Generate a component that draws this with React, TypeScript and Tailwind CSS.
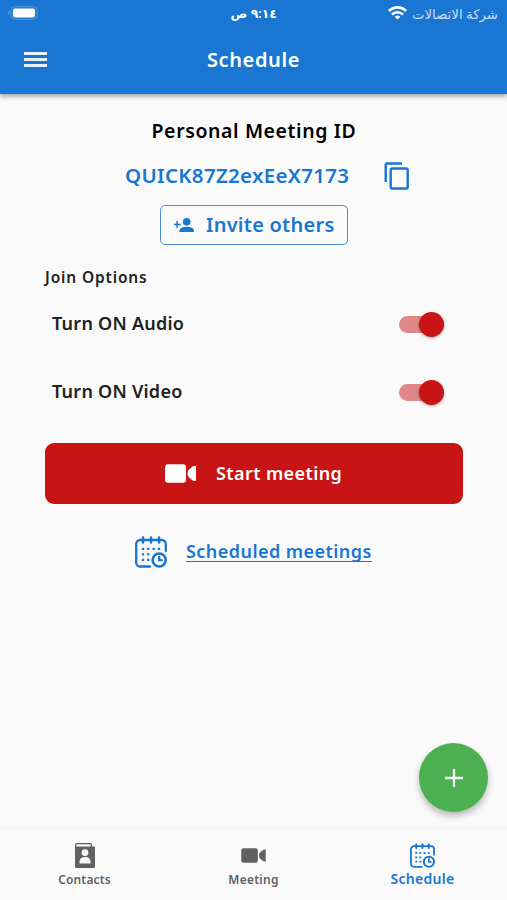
import { useState } from "react";

type IconProps = { className?: string };

function CalendarClockIcon({ className }: IconProps) {
  return (
    <svg viewBox="0 0 32 32" className={className} fill="none" stroke="currentColor" strokeWidth="2.3" strokeLinecap="round">
      <path d="M15 30.5H5.2a4 4 0 0 1-4-4V8a4 4 0 0 1 4-4h21.6a4 4 0 0 1 4 4v7" />
      <path d="M8 1.5v5M16 1.5v5M24 1.5v5" strokeWidth="2.6" />
      <path d="M8 12.8h.01M13.2 12.8h.01M18.6 12.8h.01M24 12.8h.01M8 18.4h.01M13.2 18.4h.01M8 23.8h.01M13.2 23.8h.01" strokeWidth="2.3" strokeLinecap="square" />
      <circle cx="24.2" cy="24" r="6.5" strokeWidth="2.6" />
      <path d="M24.2 20.8v3.4h2.4" />
    </svg>
  );
}

function VideoIcon({ className }: IconProps) {
  return (
    <svg viewBox="0 0 31 19" className={className} fill="currentColor">
      <rect x="0" y="0.3" width="21" height="18.4" rx="3" />
      <path d="M22.6 8.4Q22.6 7 23.6 6L27.2 2.8Q28.2 2 29.4 2H31V17H29.4Q28.2 17 27.2 16.2L23.6 13Q22.6 12 22.6 10.6Z" />
    </svg>
  );
}

function ContactsIcon({ className }: IconProps) {
  return (
    <svg viewBox="0 0 20 25" className={className}>
      <path d="M2 0H15.5a1.5 1.5 0 0 1 1.500 1.500V3.500h2a1 1 0 0 1 1 1V24a1 1 0 0 1-1 1H1.500A1.500 1.500 0 0 1 0 23.500V2a2 2 0 0 1 2-2Z" fill="#616161" />
      <path d="M2.2 1.3h13.400v2.200H2.200a1.100 1.100 0 0 1 0-2.200Z" fill="#fafafa" />
      <circle cx="10" cy="9.6" r="3.4" fill="#fafafa" />
      <path d="M4.5 20.4v-1.700c0-2.800 2-4.600 5.500-4.600s5.500 1.800 5.500 4.600v1.700Z" fill="#fafafa" />
    </svg>
  );
}

function StatusBar() {
  return (
    <div className="relative flex h-[27px] items-center justify-between pl-[8px] pr-[9px]">
      <svg viewBox="0 0 30 14" className="mb-px h-[14px] w-[30px]">
        <path d="M1.5 5v4C.6 8.7 0 8 0 7s.6-1.7 1.5-2Z" fill="#5a9cdd" />
        <rect x="3" y="0.7" width="26" height="12.6" rx="3.5" fill="none" stroke="#5a9cdd" />
        <rect x="5" y="2.4" width="22" height="9.2" rx="2" fill="#fff" />
      </svg>
      <span dir="rtl" className="absolute left-[231px] top-[5px] w-[46px] whitespace-nowrap text-center text-[12.5px] font-semibold leading-[18px]">
        ٩:١٤ ص
      </span>
      <div className="flex items-center gap-[5px]">
        <svg viewBox="0 0 19 14" className="mb-px h-[14px] w-[19px]" fill="none" stroke="#fff" strokeWidth="2.7">
          <path d="M1 5a12 12 0 0 1 17 0M4 8.5a7.8 7.8 0 0 1 11 0" />
          <path d="M9.5 13.5 6.7 10.9a4 4 0 0 1 5.6 0Z" fill="#fff" stroke="none" />
        </svg>
        <span dir="rtl" className="w-[86px] whitespace-nowrap text-[13.3px] leading-[18px] text-[#c9dff5]">
          شركة الاتصالات
        </span>
      </div>
    </div>
  );
}

function Toggle({ on, onChange }: { on: boolean; onChange: () => void }) {
  return (
    <button type="button" role="switch" aria-checked={on} onClick={onChange} className="flex h-[24px] w-[45px] items-center">
      <span className={`flex h-[17px] w-full items-center rounded-full ${on ? "justify-end bg-[#e28788]" : "justify-start bg-gray-300"}`}>
        <span className={`size-[25px] shrink-0 rounded-full shadow-[0_1px_3px_rgba(0,0,0,0.35)] ${on ? "bg-[#c81414]" : "bg-white"}`} />
      </span>
    </button>
  );
}

export default function App() {
  const [audio, setAudio] = useState(true);
  const [video, setVideo] = useState(true);

  return (
    <div className="flex h-[900px] w-[507px] flex-col overflow-hidden bg-[#fafafa] font-['Noto_Sans','DejaVu_Sans',sans-serif] text-[#212121]">
      <header className="z-10 h-[94px] shrink-0 bg-[#1976d2] text-white shadow-[0_2px_5px_rgba(0,0,0,0.4)]">
        <StatusBar />
        <div className="grid h-[65px] grid-cols-[1fr_auto_1fr] items-center px-6">
          <button type="button" aria-label="Menu" className="flex w-[23px] flex-col gap-[3px]">
            <span className="h-[3px] bg-white/90" />
            <span className="h-[3px] bg-white/90" />
            <span className="h-[3px] bg-white/90" />
          </button>
          <h1 className="whitespace-nowrap text-[20px] font-semibold leading-none tracking-[0.6px]">Schedule</h1>
        </div>
      </header>

      <main className="flex flex-1 flex-col pt-[24px]">
        <h2 className="flex h-[26px] items-center justify-center whitespace-nowrap pl-px text-[19.5px] font-semibold leading-none tracking-[0.6px] text-black">
          Personal Meeting ID
        </h2>

        <div className="mt-[16px] flex h-[32px] items-center pl-[125px] text-[#1976d2]">
          <span className="w-[259px] whitespace-nowrap pb-[2px] text-[20.5px] font-semibold leading-none tracking-[0.3px]">QUICK87Z2exEeX7173</span>
          <svg viewBox="0 0 26 28" className="h-[28px] w-[26px]" fill="none" stroke="currentColor" strokeWidth="2.4">
            <path d="M1.7 20V3a1.5 1.5 0 0 1 1.5-1.5H18" />
            <rect x="6.7" y="6.5" width="17" height="20" rx="1.5" />
          </svg>
        </div>

        <button type="button" className="ml-[160px] mt-[13px] flex h-[40px] w-[188px] items-center rounded-[5px] border border-[#4a90d9] pl-[13px] text-[#1976d2]">
          <svg viewBox="0 0 20 15" className="h-[15px] w-[20px]" fill="currentColor">
            <circle cx="12.7" cy="3.8" r="3.8" />
            <path d="M5.5 14v-1.8c0-2.4 4.7-3.5 7.2-3.5s7.2 1.1 7.2 3.5V14Z" />
            <path d="M2.4 3h1.5v2.7h2.8v1.5H3.9V10H2.4V7.2H0V5.7h2.4Z" />
          </svg>
          <span className="ml-[12px] whitespace-nowrap text-[20px] font-semibold leading-none tracking-[0.25px]">Invite others</span>
        </button>

        <h3 className="ml-[45px] mt-[21px] flex h-[24px] items-center text-[15.5px] font-semibold leading-none tracking-[0.85px]">Join Options</h3>

        <div className="mt-[22px] flex h-[24px] items-center justify-between pl-[52px] pr-[63px] text-[18px] font-semibold leading-none tracking-[0.25px]">
          <span className="pb-[2px]">Turn ON Audio</span>
          <Toggle on={audio} onChange={() => setAudio(!audio)} />
        </div>
        <div className="mt-[44px] flex h-[24px] items-center justify-between pl-[52px] pr-[63px] text-[18px] font-semibold leading-none tracking-[0.25px]">
          <span className="pb-[2px]">Turn ON Video</span>
          <Toggle on={video} onChange={() => setVideo(!video)} />
        </div>

        <button type="button" className="ml-[45px] mr-[44px] mt-[39px] flex h-[61px] items-center rounded-[9px] bg-[#c81414] pl-[120px] text-white">
          <VideoIcon className="h-[19px] w-[31px]" />
          <span className="ml-[20px] whitespace-nowrap pb-[2px] text-[18px] font-semibold leading-none tracking-[0.4px]">Start meeting</span>
        </button>

        <a href="#" className="mt-[32px] flex h-[32px] items-center pl-[135px] text-[#1976d2]">
          <CalendarClockIcon className="size-[32px]" />
          <span className="ml-[19px] h-[20px] whitespace-nowrap border-b border-current text-[18px] font-semibold leading-[19px] tracking-[0.45px]">Scheduled meetings</span>
        </a>

        <button type="button" aria-label="Add" className="mb-[16px] mr-[19px] mt-auto flex size-[69px] items-center justify-center self-end rounded-full bg-[#4caf50] text-white shadow-[0_4px_7px_rgba(0,0,0,0.28)]">
          <svg viewBox="0 0 18 18" className="size-[18px]" stroke="currentColor" strokeWidth="2.3">
            <path d="M9 0v18M0 9h18" />
          </svg>
        </button>
      </main>

      <nav className="grid h-[72px] shrink-0 grid-cols-3 border-t border-[#f5f5f5] bg-[#fafafa] text-[#616161]">
        <button type="button" className="flex flex-col items-center pt-[14px]">
          <ContactsIcon className="h-[25px] w-[20px]" />
          <span className="mt-[5px] text-[12px] font-semibold leading-[14px] tracking-[0.15px]">Contacts</span>
        </button>
        <button type="button" className="flex flex-col items-center pt-[19px]">
          <VideoIcon className="h-[15px] w-[25px]" />
          <span className="mt-[10px] text-[12px] font-semibold leading-[14px] tracking-[0.25px]">Meeting</span>
        </button>
        <button type="button" className="flex flex-col items-center pt-[14px] text-[#1976d2]">
          <CalendarClockIcon className="size-[25px]" />
          <span className="mt-[3px] text-[14px] font-semibold leading-[15px] tracking-[0.3px]">Schedule</span>
        </button>
      </nav>
    </div>
  );
}
